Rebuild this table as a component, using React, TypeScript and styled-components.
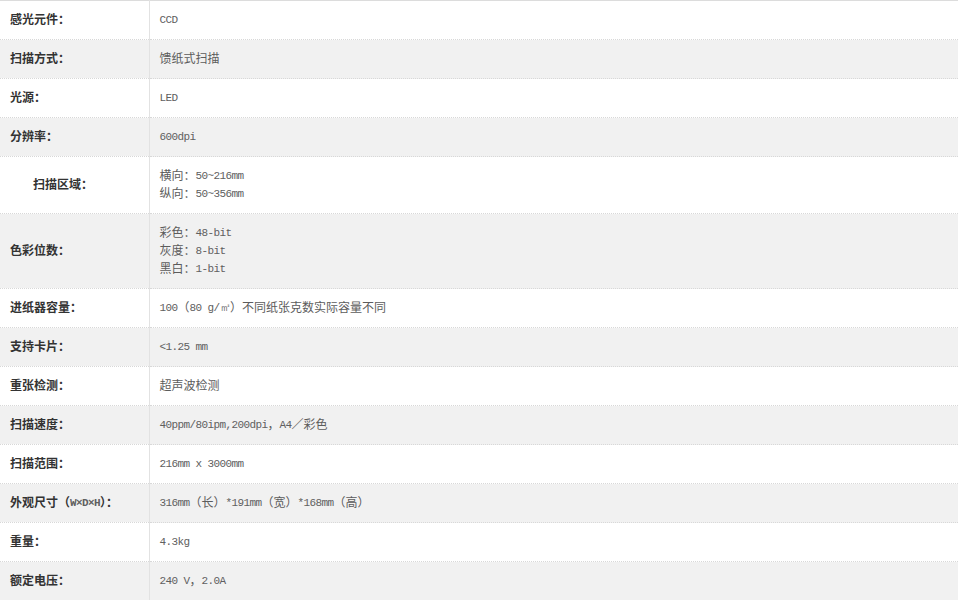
import React from "react";
import styled, { createGlobalStyle } from "styled-components";

const Global = createGlobalStyle`
  body {
    margin: 0;
    background: #fff;
    font-family: "Noto Sans CJK SC", "Noto Sans", sans-serif;
  }
`;

const Table = styled.table`
  width: 958px;
  table-layout: fixed;
  border-collapse: collapse;
  border-top: 1px solid #dcdcdc;
  font-size: 12px;
  line-height: 18px;
`;

const LabelCol = styled.col`
  width: 149px;
`;

const Row = styled.tr<{ $alt: boolean }>`
  background: ${(p) => (p.$alt ? "#f1f1f1" : "#fff")};
  border-bottom: 1px dotted #d8d8d8;
`;

const Label = styled.td<{ $indent?: boolean }>`
  padding: 9px 0 11px ${(p) => (p.$indent ? "33px" : "10px")};
  border-right: 1px solid #e2e2e2;
  font-weight: bold;
  color: #333;
  vertical-align: middle;
  white-space: nowrap;
  overflow: hidden;
`;

const Value = styled.td`
  padding: 9px 10px 11px;
  color: #5c5c5c;
  vertical-align: middle;
`;

const Line = styled.div`
  height: 18px;
  line-height: 18px;
  white-space: nowrap;
`;

const Latin = styled.span`
  font-family: "Liberation Mono", monospace;
  font-size: 11px;
  letter-spacing: -0.6px;
  line-height: 1;
  vertical-align: 1px;
  color: #606060;
`;

type Spec = { label: React.ReactNode; indent?: boolean; lines: React.ReactNode[] };

const specs: Spec[] = [
  { label: "感光元件：", lines: [<Latin>CCD</Latin>] },
  { label: "扫描方式：", lines: ["馈纸式扫描"] },
  { label: "光源：", lines: [<Latin>LED</Latin>] },
  { label: "分辨率：", lines: [<Latin>600dpi</Latin>] },
  {
    label: "扫描区域：",
    indent: true,
    lines: [
      <>横向：<Latin>50~216mm</Latin></>,
      <>纵向：<Latin>50~356mm</Latin></>,
    ],
  },
  {
    label: "色彩位数：",
    lines: [
      <>彩色：<Latin>48-bit</Latin></>,
      <>灰度：<Latin>8-bit</Latin></>,
      <>黑白：<Latin>1-bit</Latin></>,
    ],
  },
  {
    label: "进纸器容量：",
    lines: [<><Latin>100</Latin>（<Latin>80 g/㎡</Latin>）不同纸张克数实际容量不同</>],
  },
  { label: "支持卡片：", lines: [<Latin>&lt;1.25 mm</Latin>] },
  { label: "重张检测：", lines: ["超声波检测"] },
  { label: "扫描速度：", lines: [<><Latin>40ppm/80ipm,200dpi</Latin>，<Latin>A4</Latin>／彩色</>] },
  { label: "扫描范围：", lines: [<Latin>216mm x 3000mm</Latin>] },
  {
    label: <>外观尺寸（<Latin>W×D×H</Latin>）：</>,
    lines: [<><Latin>316mm</Latin>（长）<Latin>*191mm</Latin>（宽）<Latin>*168mm</Latin>（高）</>],
  },
  { label: "重量：", lines: [<Latin>4.3kg</Latin>] },
  { label: "额定电压：", lines: [<><Latin>240 V</Latin>，<Latin>2.0A</Latin></>] },
];

export default function App() {
  return (
    <>
      <Global />
      <Table>
        <colgroup>
          <LabelCol />
          <col />
        </colgroup>
        <tbody>
          {specs.map((s, i) => (
            <Row key={i} $alt={i % 2 === 1}>
              <Label $indent={s.indent}>{s.label}</Label>
              <Value>
                {s.lines.map((l, j) => (
                  <Line key={j}>{l}</Line>
                ))}
              </Value>
            </Row>
          ))}
        </tbody>
      </Table>
    </>
  );
}
